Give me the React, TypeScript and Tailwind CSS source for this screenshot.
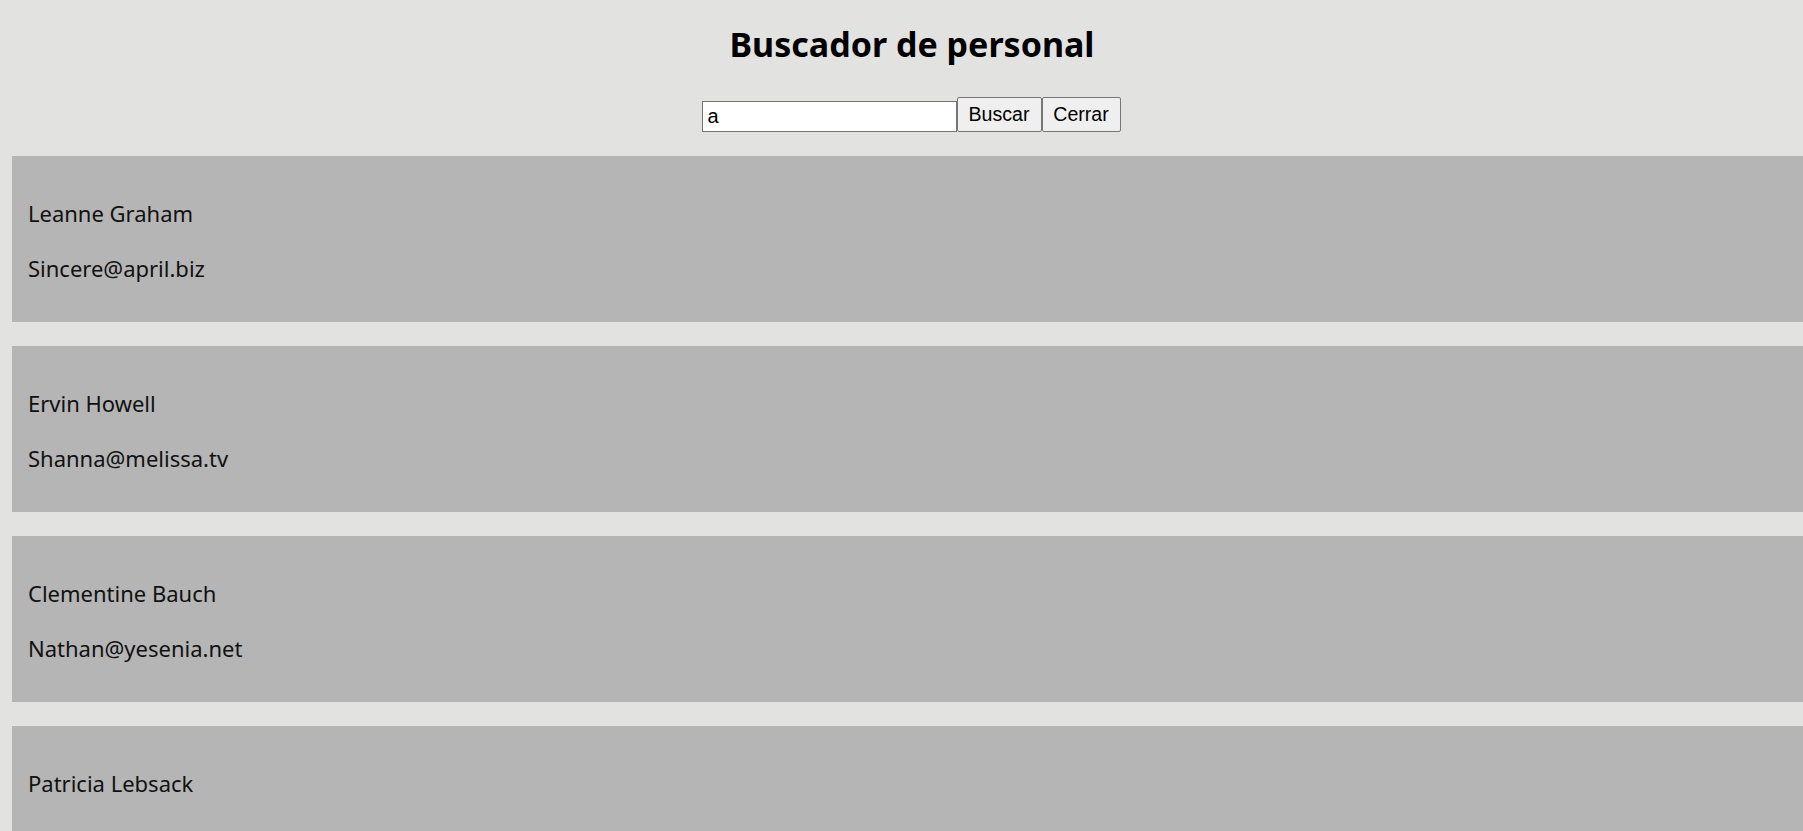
import React from 'react';

interface Person {
  name: string;
  email: string;
}

const people: Person[] = [
  { name: 'Leanne Graham', email: 'Sincere@april.biz' },
  { name: 'Ervin Howell', email: 'Shanna@melissa.tv' },
  { name: 'Clementine Bauch', email: 'Nathan@yesenia.net' },
  { name: 'Patricia Lebsack', email: 'Julianne.OConner@kory.org' },
];

const PersonCard: React.FC<Person> = ({ name, email }) => (
  <div className="bg-[#b4b5b4] pl-[16px] pt-[43px] pb-[40px] flex flex-col gap-[27px] text-[22px] leading-[28px] text-[#111]">
    <p>{name}</p>
    <p>{email}</p>
  </div>
);

export default function App() {
  return (
    <div className="h-screen overflow-hidden bg-[#e2e2e0] font-['Noto_Sans',sans-serif]">
      <div className="ml-[12px] w-[1800px]">
        <h1 className="pt-[22px] text-center text-[34px] leading-[44px] font-bold text-black">
          Buscador de personal
        </h1>

        <div className="mt-[31px] pr-[2px] flex items-end justify-center font-['Liberation_Sans',Arial,sans-serif]">
          <input
            type="text"
            defaultValue="a"
            className="w-[255px] h-[31px] border border-[#767676] bg-white px-[5px] text-[20px] leading-[23px] text-black outline-none"
          />
          <button className="h-[35px] w-[85px] border border-[#767676] rounded-[2px] bg-[#efefef] text-[19.6px] text-black">
            Buscar
          </button>
          <button className="h-[35px] w-[79px] border border-[#767676] rounded-[2px] bg-[#efefef] text-[19.6px] text-black">
            Cerrar
          </button>
        </div>

        <div className="mt-[24px] flex flex-col gap-[24px]">
          {people.map((p, i) => (
            <PersonCard key={i} name={p.name} email={p.email} />
          ))}
        </div>
      </div>
    </div>
  );
}
